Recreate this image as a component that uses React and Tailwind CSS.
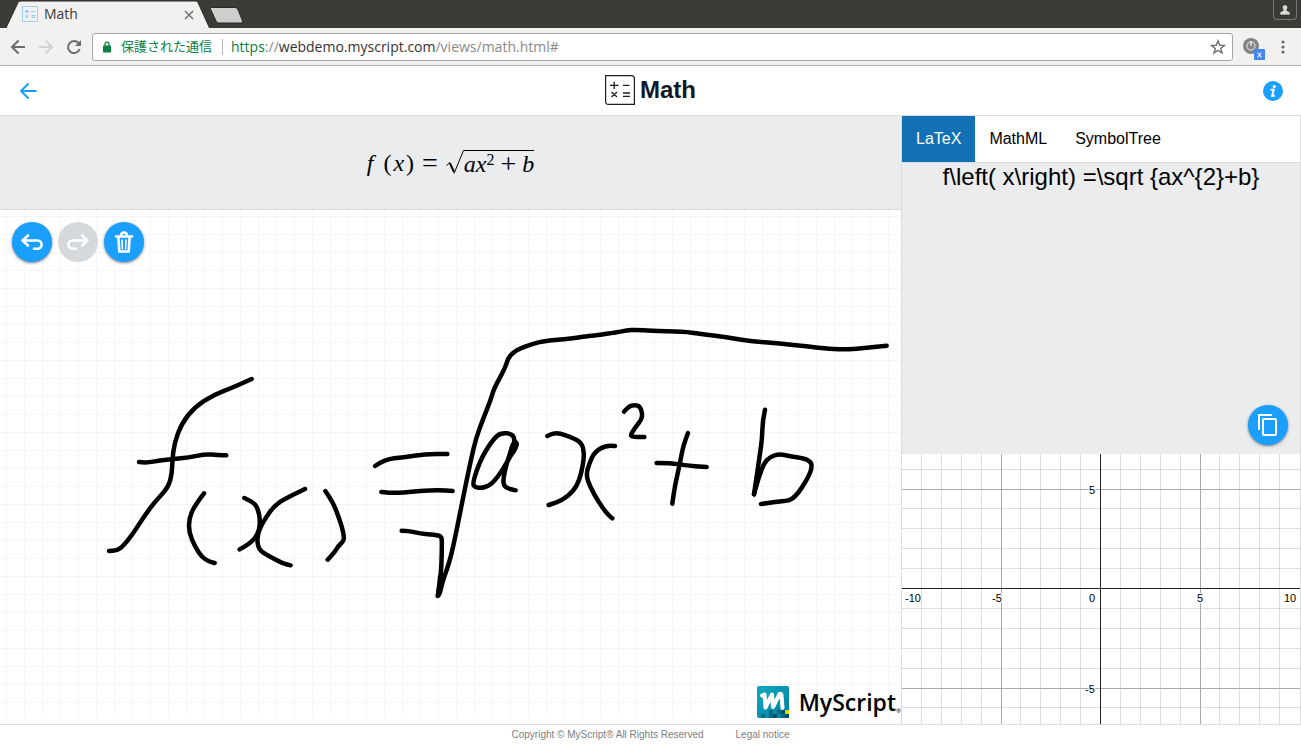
import React from "react";

const INK = [
  {
    origin: "translate(90 150) scale(0.33333)",
    strokes: [
      "485,57 430,82 370,105 315,140 275,190 253,250 247,300 246,340 235,382 195,425 165,465 130,520 100,558 80,572 57,573",
      "147,306 170,309 210,301 250,297 295,293 345,282 385,285 409,286",
      "342,400 315,435 297,475 297,518 315,560 335,590 355,604 374,609",
      "463,414 492,427 505,450 510,480 508,510 495,535 475,553 449,568",
      "645,387 590,413 553,437 528,472 512,500 503,525 502,550 508,568 520,579 550,595 580,611 602,616",
      "706,393 728,425 745,468 757,505 762,530 761,543 745,558 735,575 713,599",
    ],
  },
  {
    origin: "translate(360 110) scale(0.33333)",
    strokes: [
      "45,438 75,418 130,412 195,402 262,402",
      "64,516 95,519 130,518 180,513 235,510 278,513",
      "125,632 145,632 180,641 225,644 244,649 246,665 244,750 237,800 233,830 240,820 246,790 262,745 275,700 290,630 318,490 335,410 348,355 370,295 392,240 402,205 435,145 444,115 460,97 480,85 515,73 550,63 620,57 680,49 710,46 770,37 800,31 830,29 870,33 970,35 1020,41 1100,52 1170,63 1260,71 1340,79 1410,87 1460,88 1520,84 1580,77",
      "233,828 240,800 240,770",
      "463,365 463,350 450,341 430,339 412,345 390,372 368,408 350,450 338,492 345,502 365,504 385,498 400,486 425,455 450,410 474,370 460,366 452,395 440,430 430,475 431,497 445,506 467,511",
      "466,366 474,371 455,405 452,390 466,366",
      "562,348 578,340 600,340 635,352 665,368 673,400 668,440 658,480 642,512 605,542 566,555",
      "765,378 740,374 703,397 688,430 678,465 690,500 715,545 740,580 757,595",
    ],
  },
  {
    origin: "translate(600 110) scale(0.33333)",
    strokes: [
      "72,275 85,260 105,254 120,260 127,280 125,298 108,320 92,343 95,351 133,351",
      "170,429 215,429 250,436 320,441",
      "264,339 250,375 240,430 225,495 217,551",
      "495,269 488,300 486,360 480,400 473,450 462,523",
      "462,523 474,480 480,462 492,430 510,410 538,402 575,409 615,416 632,425 636,440 628,465 605,505 585,530 568,542 525,546 483,552",
    ],
  },
];

// Joins the sampled pen positions through the midpoints of their segments.
function smooth(points) {
  const p = points.split(" ").map((s) => s.split(",").map(Number));
  let d = `M${p[0][0]} ${p[0][1]}`;
  for (let i = 1; i < p.length - 1; i++) {
    const mx = (p[i][0] + p[i + 1][0]) / 2;
    const my = (p[i][1] + p[i + 1][1]) / 2;
    d += ` Q${p[i][0]} ${p[i][1]} ${mx} ${my}`;
  }
  const last = p[p.length - 1];
  return d + ` L${last[0]} ${last[1]}`;
}

const GRID_X = [19, 39, 59, 79, 118, 138, 158, 178, 218, 238, 258, 278, 317, 337, 357, 377];
const GRID_Y = [15, 54, 74, 94, 114, 154, 174, 194, 214, 253];

function MathGlyphs({ className }) {
  return (
    <svg className={className} viewBox="0 0 30 30" fill="none" stroke="currentColor" aria-hidden="true">
      <path d="M.6 .6H26.5Q29.4 .6 29.4 3.5V29.4H3.5Q.6 29.4 .6 26.5Z" strokeWidth="1.2" />
      <path d="M5 10.400h8.500M9.200 6.800v7.200M18 10.400h6.500M6.500 17l5.500 5M12 17l-5.500 5M18 18h7M18 21.400h7" strokeWidth="1.300" />
    </svg>
  );
}

function BrowserChrome() {
  return (
    <div className="font-['Open_Sans','Noto_Sans_CJK_JP',sans-serif]">
      <div className="flex h-7 items-end justify-between bg-[#3c3b37]">
        <div className="flex items-end">
          <div className="relative flex h-7 w-[210px] items-center pr-[15px] pl-[22px]">
            <svg className="absolute inset-0 h-full w-full" viewBox="0 0 210 28" preserveAspectRatio="none" aria-hidden="true">
              <path d="M5.500 29L18 2.500Q18.700 1 20 1H196Q197.500 1 198 2.500L210 29Z" fill="#f2f1f0" stroke="#2b2a27" />
            </svg>
            <div className="relative flex w-full items-center">
              <MathGlyphs className="size-4 text-[#55b4fb]" />
              <span className="ml-1.5 flex-1 text-sm leading-7 text-[#3c3c3c]">Math</span>
              <button type="button" aria-label="Close tab" className="mt-0.5">
                <svg className="size-3" viewBox="0 0 12 12" stroke="#7c7b7a" strokeWidth="1.700" aria-hidden="true">
                  <path d="M2 2l8 8M10 2l-8 8" />
                </svg>
              </button>
            </div>
          </div>
          <button type="button" aria-label="New tab" className="mb-1">
            <svg className="h-[18px] w-[34px]" viewBox="0 0 34 18" aria-hidden="true">
              <path d="M1 1.500H25Q27 1.500 27.700 3L32.500 15Q33 17 31 17H9Q7 17 6.300 15.500L.5 3Q0 1.500 1 1.500Z" fill="#cfcecd" stroke="#2b2a27" />
            </svg>
          </button>
        </div>
        <button type="button" aria-label="Profile" className="mr-1 flex h-5 w-6 items-start justify-center self-start rounded-b border border-t-0 border-[#77756f] pt-1">
          <svg className="h-3 w-3" viewBox="0 0 12 12" fill="#dcdbd8" stroke="#222" strokeWidth=".6" aria-hidden="true">
            <path d="M6 .8a2.700 2.700 0 0 0-2 4.500L4.300 6.500 1 8V11H11V8L7.700 6.500 8 5.300A2.700 2.700 0 0 0 6 .8Z" />
          </svg>
        </button>
      </div>

      <div className="flex h-[38px] items-center border-b border-[#b6b4b2] bg-[#f2f1f0] pr-3 pl-2.5">
        <button type="button" aria-label="Back">
          <svg className="size-4" viewBox="0 0 16 16" fill="none" stroke="#6d6c6b" strokeWidth="2" aria-hidden="true">
            <path d="M15 8H2.500M8.500 1.500L2 8l6.500 6.500" />
          </svg>
        </button>
        <button type="button" aria-label="Forward" className="ml-3">
          <svg className="size-4" viewBox="0 0 16 16" fill="none" stroke="#d4d3d2" strokeWidth="2" aria-hidden="true">
            <path d="M1 8H13.500M7.500 1.500L14 8l-6.500 6.500" />
          </svg>
        </button>
        <button type="button" aria-label="Reload" className="ml-3">
          <svg className="size-4" viewBox="0 0 16 16" fill="none" stroke="#6d6c6b" strokeWidth="2" aria-hidden="true">
            <path d="M13.700 10A6 6 0 1 1 12.500 4" />
            <path d="M15 1v6H9z" fill="#6d6c6b" stroke="none" />
          </svg>
        </button>
        <div className="ml-2.5 flex h-7 flex-1 items-center rounded-[3px] border border-[#a9a7a6] bg-white pr-1.5 pl-2.5">
          <svg className="h-3 w-2" viewBox="0 0 8 12" aria-hidden="true">
            <path d="M2 5V3.200a2 2 0 0 1 4 0V5" fill="none" stroke="#0b8043" strokeWidth="1.300" />
            <rect y="4.500" width="8" height="7" rx=".7" fill="#0b8043" />
          </svg>
          <span className="ml-2.5 text-[13px] text-[#0b8043]">保護された通信</span>
          <span className="mr-2 ml-2.5 h-4 border-l border-[#b5b5b5]" />
          <span className="flex-1 text-sm text-[#8a8a8a]">
            <span className="text-[#0b8043]">https</span>://<span className="text-[#333]">webdemo.myscript.com</span>/views/math.html#
          </span>
          <button type="button" aria-label="Bookmark this page">
            <svg className="size-4" viewBox="0 0 16 16" fill="none" stroke="#6f6e6d" strokeWidth="1.400" aria-hidden="true">
              <path d="M8 1.800l1.700 4.400 4.700.2-3.700 3 1.300 4.600L8 11.400 4 14l1.300-4.600-3.700-3 4.700-.2z" />
            </svg>
          </button>
        </div>
        <button type="button" aria-label="Extension" className="mt-1 ml-2.5">
          <svg className="size-[22px]" viewBox="0 0 22 22" fill="none" aria-hidden="true">
            <circle cx="8" cy="8" r="8" fill="#858483" />
            <circle cx="8" cy="8" r="4" stroke="#cfcecd" strokeWidth="1.400" />
            <path d="M8 3v5" stroke="#e2e1e0" strokeWidth="1.600" />
            <rect x="11" y="11" width="11" height="11" rx="1" fill="#4285f4" />
            <path d="M14.500 14.500l4 5M18.500 14.500l-4 5" stroke="#fff" strokeWidth="1.100" />
          </svg>
        </button>
        <button type="button" aria-label="Menu" className="ml-2">
          <svg className="h-4 w-4" viewBox="0 0 16 16" fill="#6d6c6b" aria-hidden="true">
            <circle cx="10" cy="3" r="1.600" />
            <circle cx="10" cy="8" r="1.600" />
            <circle cx="10" cy="13" r="1.600" />
          </svg>
        </button>
      </div>
    </div>
  );
}

function Header() {
  return (
    <header className="flex h-[50px] items-center justify-between border-b border-[#dcdddf] bg-white px-[18px]">
      <a href="#" aria-label="Back to demos">
        <svg className="size-5" viewBox="0 0 20 20" fill="none" stroke="#1a9fff" strokeWidth="2" strokeLinecap="round" strokeLinejoin="round" aria-hidden="true">
          <path d="M18 10H3M10 3L3 10l7 7" />
        </svg>
      </a>
      <h1 className="flex items-center gap-[5px] pb-px text-2xl leading-[30px] font-bold text-[#0e1726]">
        <MathGlyphs className="size-[30px] text-[#1c1c1c]" />
        Math
      </h1>
      <button type="button" aria-label="Information">
        <svg className="size-5" viewBox="0 0 20 20" aria-hidden="true">
          <circle cx="10" cy="10" r="10" fill="#1a9fff" />
          <circle cx="11.300" cy="5.500" r="1.600" fill="#fff" />
          <path d="M7.500 8.800h3.200l-1.500 6h2.600" fill="none" stroke="#fff" strokeWidth="2" />
        </svg>
      </button>
    </header>
  );
}

function Formula() {
  return (
    <div className="flex h-[94px] items-center justify-center border-b border-[#dcdddf] bg-[#ebecee] font-['Liberation_Serif',serif] text-2xl leading-6 text-black">
      <i className="pr-1">f</i>
      <span className="flex gap-px pl-1.5">
        (<i className="px-px">x</i>)
      </span>
      <span className="ml-2 text-[28px]">=</span>
      <svg className="ml-2 h-[25px] w-[18px]" viewBox="0 0 18 25" fill="none" stroke="#000" aria-hidden="true">
        <path d="M.5 15.500L4 12.500" strokeWidth="1" />
        <path d="M3.800 12.800L8 22" strokeWidth="2" />
        <path d="M8 23.500L17.500 .5H18" strokeWidth="1" />
      </svg>
      <span className="flex h-[25px] border-t border-black pt-px">
        <i>ax</i>
        <span className="text-base leading-4">2</span>
        <span className="mx-1.5 text-[28px]">+</span>
        <i>b</i>
      </span>
    </div>
  );
}

function RoundButton({ label, className, children, ...rest }) {
  return (
    <button type="button" aria-label={label} className={"flex size-10 items-center justify-center rounded-full " + className} {...rest}>
      {children}
    </button>
  );
}

function WritingArea() {
  return (
    <section className="flex flex-1 flex-col bg-white pb-1.5">
      <div className="relative flex flex-1 flex-col justify-between bg-[linear-gradient(to_right,#f5f5f5_1px,transparent_1px),linear-gradient(to_bottom,#f5f5f5_1px,transparent_1px)] bg-[size:18px_18px] bg-[position:6px_6px]">
        <svg className="absolute inset-0 h-full w-full" viewBox="0 0 901 508" preserveAspectRatio="xMinYMin meet" role="img" aria-label="Handwritten formula">
          {INK.map((group) => (
            <g key={group.origin} transform={group.origin} fill="none" stroke="#000" strokeWidth="13.500" strokeLinecap="round" strokeLinejoin="round">
              {group.strokes.map((s) => (
                <path key={s} d={smooth(s)} />
              ))}
            </g>
          ))}
        </svg>
        <div className="relative flex gap-1.5 p-3">
          <RoundButton label="Undo" className="bg-[#1a9fff] shadow-[0_1px_3px_rgba(0,0,0,0.5)]">
            <svg className="h-5 w-6" viewBox="0 0 24 20" fill="none" stroke="#fff" strokeWidth="2.600" strokeLinecap="round" strokeLinejoin="round" aria-hidden="true">
              <path d="M8 3.500L2.500 8.500l5.500 5M3 8.500H17.500a4 4 0 0 1 0 8.200H14" />
            </svg>
          </RoundButton>
          <RoundButton label="Redo" className="bg-[#d5d9dc]" disabled>
            <svg className="h-5 w-6" viewBox="0 0 24 20" fill="none" stroke="#fff" strokeWidth="2.600" strokeLinecap="round" strokeLinejoin="round" aria-hidden="true">
              <path d="M16 3.500L21.500 8.500l-5.500 5M21 8.500H6.500a4 4 0 0 0 0 8.200H10" />
            </svg>
          </RoundButton>
          <RoundButton label="Clear" className="bg-[#1a9fff] shadow-[0_1px_3px_rgba(0,0,0,0.5)]">
            <svg className="h-6 w-5" viewBox="0 0 20 24" fill="none" stroke="#fff" strokeWidth="2" strokeLinecap="round" strokeLinejoin="round" aria-hidden="true">
              <path d="M2 6.500H18M7 6Q7 2.500 10 2.500T13 6M4.300 7L5.300 21.500H14.700L15.700 7" strokeWidth="2.600" />
              <path d="M8 10l.4 9M12 10l-.4 9" strokeWidth="1.600" />
            </svg>
          </RoundButton>
        </div>
        <div className="relative flex items-center justify-end gap-2.5 self-end">
          <svg className="size-8" viewBox="0 0 32 32" aria-hidden="true">
            <defs>
              <linearGradient id="brand" x1="0" y1="0" x2="1" y2="1">
                <stop offset="0" stopColor="#10a9c4" />
                <stop offset="1" stopColor="#007f9b" />
              </linearGradient>
            </defs>
            <path d="M2 0H30Q32 0 32 2V32H2Q0 32 0 30V2Q0 0 2 0Z" fill="url(#brand)" />
            <path d="M4 28h4v4H4zM12 28h4v4h-4zM20 24h4v4h-4zM24 28h4v4h-4zM12 24h4v4h-4z" fill="#006a85" />
            <path d="M16 28h4v4h-4zM24 24h4v4h-4zM28 28h4v4h-4z" fill="#004e66" />
            <path d="M28 24h4v4h-4z" fill="#d4e000" />
            <path d="M5 9.500L7.500 8.500 8.500 21.500 15 8.500 16 21 22.500 8Q24 7 24.500 9L25.500 22" fill="none" stroke="#fff" strokeWidth="4" strokeLinecap="round" strokeLinejoin="round" />
          </svg>
          <span className="flex items-end font-['Open_Sans',sans-serif] text-[23px] leading-8 font-semibold text-black">
            MyScript<span className="mb-1 text-[6px] leading-none font-normal">®</span>
          </span>
        </div>
      </div>
    </section>
  );
}

function Graph() {
  return (
    <svg className="h-[270px] w-full bg-white" viewBox="0 0 398 270" preserveAspectRatio="none" shapeRendering="crispEdges" role="img" aria-label="Graph from -10 to 10">
      <g fill="none" strokeWidth="1">
        <g stroke="#000" strokeOpacity=".13">
          {GRID_X.map((x) => (
            <path key={x} d={`M${x + 0.5} 0V270`} />
          ))}
          {GRID_Y.map((y) => (
            <path key={y} d={`M0 ${y + 0.5}H398`} />
          ))}
        </g>
        <path d="M99.500 0V270M298.500 0V270M0 35.500H398M0 234.500H398" stroke="#a9a9a9" />
        <path d="M198.500 0V270M0 134.500H398" stroke="#222" />
      </g>
      <g fill="#000" stroke="#fff" strokeWidth="2" paintOrder="stroke" fontSize="11" fontFamily="Liberation Sans, Arial, sans-serif">
        <text x="3" y="148">-10</text>
        <text x="90" y="148">-5</text>
        <text x="187" y="148">0</text>
        <text x="295" y="148">5</text>
        <text x="382" y="148">10</text>
        <text x="187" y="40">5</text>
        <text x="183" y="239">-5</text>
      </g>
    </svg>
  );
}

function ResultPanel() {
  return (
    <aside className="flex w-[400px] shrink-0 flex-col border-x border-[#dcdddf] bg-[#ebecee]">
      <div role="tablist" className="flex h-[47px] border-b border-[#dcdddf] bg-white text-base text-black">
        <button type="button" role="tab" aria-selected="true" className="bg-[#1270b4] px-3.5 text-white">
          LaTeX
        </button>
        <button type="button" role="tab" aria-selected="false" className="px-3.5">
          MathML
        </button>
        <button type="button" role="tab" aria-selected="false" className="px-3.5">
          SymbolTree
        </button>
      </div>
      <div role="tabpanel" className="flex flex-1 flex-col justify-between">
        <p className="text-center text-2xl leading-7 text-black">{"f\\left( x\\right) =\\sqrt {ax^{2}+b}"}</p>
        <RoundButton label="Copy" className="mr-3 mb-[9px] self-end bg-[#1a9fff] shadow-[0_1px_3px_rgba(0,0,0,0.5)]">
          <svg className="size-6" viewBox="0 0 24 24" fill="none" stroke="#fff" strokeWidth="2" aria-hidden="true">
            <path d="M3 17V2H16" />
            <rect x="7" y="6" width="13" height="16" rx="1" />
          </svg>
        </RoundButton>
      </div>
      <Graph />
    </aside>
  );
}

export default function App() {
  return (
    <div className="flex min-h-screen flex-col bg-white font-['Liberation_Sans',Arial,sans-serif]">
      <BrowserChrome />
      <Header />
      <main className="flex flex-1">
        <div className="flex min-w-0 flex-1 flex-col">
          <Formula />
          <WritingArea />
        </div>
        <ResultPanel />
      </main>
      <footer className="flex h-5 items-center justify-center gap-8 border-t border-[#dcdddf] text-[10px] text-[#7c8083]">
        <span>Copyright © MyScript® All Rights Reserved</span>
        <a href="#">Legal notice</a>
      </footer>
    </div>
  );
}
